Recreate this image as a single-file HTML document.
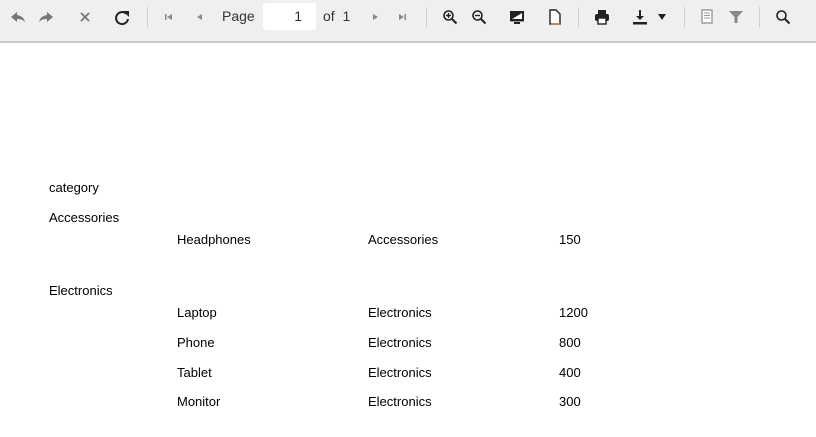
<!DOCTYPE html>
<html><head><meta charset="utf-8"><style>
*{margin:0;padding:0;box-sizing:border-box}
body{width:816px;height:437px;background:#fff;font-family:"Liberation Sans",Arial,sans-serif;position:relative;overflow:hidden;color:#000}
.tb{position:absolute;left:0;top:0;width:816px;height:43px;background:#efefef;border-bottom:2px solid #c8c8c8}
.sep{position:absolute;top:7px;width:1px;height:20px;background:#cfcfcf}
.ic{position:absolute;top:9px}
.t{position:absolute;font-size:13px;white-space:nowrap}
.tb .t{font-size:14px;color:#333;top:8px}
.inp{position:absolute;left:263px;top:3px;width:53px;height:27px;background:#fff;border-radius:2px;font-size:14px;color:#333;text-align:right;padding:5px 14px 0 0}
</style></head><body>
<div class="tb">
<svg class="ic" style="left:10px" width="16" height="16" viewBox="0 0 16 16"><path d="M7 3L1 8l6 5V10c4 0 6 1 8 3-1-4-3-6-8-7z" fill="#777"/></svg>
<svg class="ic" style="left:38px" width="16" height="16" viewBox="0 0 16 16"><path d="M9 3l6 5-6 5V10c-4 0-6 1-8 3 1-4 3-6 8-7z" fill="#777"/></svg>
<svg class="ic" style="left:78px" width="14" height="16" viewBox="0 0 14 16"><path d="M3 4l8 8M11 4L3 12" stroke="#777" stroke-width="1.8"/></svg>
<svg class="ic" style="left:114px" width="17" height="17" viewBox="0 0 17 17"><path d="M12.5 5A6 6 0 1 0 14 10" fill="none" stroke="#222" stroke-width="2"/><path d="M9 2h6v6z" fill="#222"/></svg>
<div class="sep" style="left:147px"></div>
<svg class="ic" style="left:164px" width="10" height="16" viewBox="0 0 10 16"><path d="M1 5h1.5v6H1zM8 5v6L3 8z" fill="#888"/></svg>
<svg class="ic" style="left:195px" width="10" height="16" viewBox="0 0 10 16"><path d="M7 5v6L2 8z" fill="#888"/></svg>
<div class="t" style="left:222px">Page</div>
<div class="inp">1</div>
<div class="t" style="left:323px">of&nbsp; 1</div>
<svg class="ic" style="left:370px" width="10" height="16" viewBox="0 0 10 16"><path d="M3 5v6l5-3z" fill="#888"/></svg>
<svg class="ic" style="left:397px" width="10" height="16" viewBox="0 0 10 16"><path d="M2 5v6l5-3zM7.5 5H9v6H7.5z" fill="#888"/></svg>
<div class="sep" style="left:426px"></div>
<svg class="ic" style="left:442px" width="16" height="16" viewBox="0 0 16 16"><circle cx="6.5" cy="6.5" r="4.5" fill="none" stroke="#222" stroke-width="1.6"/><path d="M10 10l4.5 4.5" stroke="#222" stroke-width="2"/><path d="M4 6.5h5M6.5 4v5" stroke="#222" stroke-width="1.4"/></svg>
<svg class="ic" style="left:471px" width="16" height="16" viewBox="0 0 16 16"><circle cx="6.5" cy="6.5" r="4.5" fill="none" stroke="#222" stroke-width="1.6"/><path d="M10 10l4.5 4.5" stroke="#222" stroke-width="2"/><path d="M4 6.5h5" stroke="#222" stroke-width="1.4"/></svg>
<svg class="ic" style="left:509px" width="16" height="16" viewBox="0 0 16 16"><rect x="1" y="2" width="14" height="10" fill="#222"/><path d="M3 10L13 4v6z" fill="#fff"/><path d="M1 12h14v1H1z" fill="#e08a2a"/><rect x="5" y="13" width="6" height="2" fill="#222"/></svg>
<svg class="ic" style="left:548px" width="14" height="16" viewBox="0 0 14 16"><path d="M2 1h6l4 4v10H2z" fill="#fff" stroke="#222" stroke-width="1.4"/><path d="M3 15h9" stroke="#e08a2a" stroke-width="1.2"/></svg>
<div class="sep" style="left:578px"></div>
<svg class="ic" style="left:594px" width="16" height="16" viewBox="0 0 16 16"><rect x="4" y="1" width="8" height="4" fill="#222"/><rect x="1" y="5" width="14" height="7" rx="2" fill="#222"/><rect x="4" y="9" width="8" height="6" fill="#fff" stroke="#222" stroke-width="1.4"/></svg>
<svg class="ic" style="left:632px" width="16" height="16" viewBox="0 0 16 16"><path d="M7 1h2v6h3l-4 4-4-4h3z" fill="#222"/><rect x="1" y="13" width="14" height="2.5" fill="#222"/></svg>
<svg class="ic" style="left:657px" width="10" height="16" viewBox="0 0 10 16"><path d="M1 5h8l-4 6z" fill="#222"/></svg>
<div class="sep" style="left:684px"></div>
<svg class="ic" style="left:700px" width="14" height="16" viewBox="0 0 14 16"><rect x="2" y="1" width="10" height="13" fill="#fff" stroke="#999" stroke-width="1.4"/><path d="M4 4h6M4 6.5h6M4 9h6" stroke="#999"/></svg>
<svg class="ic" style="left:728px" width="16" height="16" viewBox="0 0 16 16"><path d="M1 2h14L9.5 8v6h-3V8z" fill="#888"/></svg>
<div class="sep" style="left:759px"></div>
<svg class="ic" style="left:775px" width="16" height="16" viewBox="0 0 16 16"><circle cx="6.5" cy="6.5" r="4.5" fill="none" stroke="#222" stroke-width="1.6"/><path d="M10 10l4.5 4.5" stroke="#222" stroke-width="2"/></svg>
</div>
<div class="t" style="left:49px;top:180px">category</div>
<div class="t" style="left:49px;top:210px">Accessories</div>
<div class="t" style="left:177px;top:232px">Headphones</div><div class="t" style="left:368px;top:232px">Accessories</div><div class="t" style="left:559px;top:232px">150</div>
<div class="t" style="left:49px;top:283px">Electronics</div>
<div class="t" style="left:177px;top:305px">Laptop</div><div class="t" style="left:368px;top:305px">Electronics</div><div class="t" style="left:559px;top:305px">1200</div>
<div class="t" style="left:177px;top:335px">Phone</div><div class="t" style="left:368px;top:335px">Electronics</div><div class="t" style="left:559px;top:335px">800</div>
<div class="t" style="left:177px;top:365px">Tablet</div><div class="t" style="left:368px;top:365px">Electronics</div><div class="t" style="left:559px;top:365px">400</div>
<div class="t" style="left:177px;top:394px">Monitor</div><div class="t" style="left:368px;top:394px">Electronics</div><div class="t" style="left:559px;top:394px">300</div>
</body></html>
